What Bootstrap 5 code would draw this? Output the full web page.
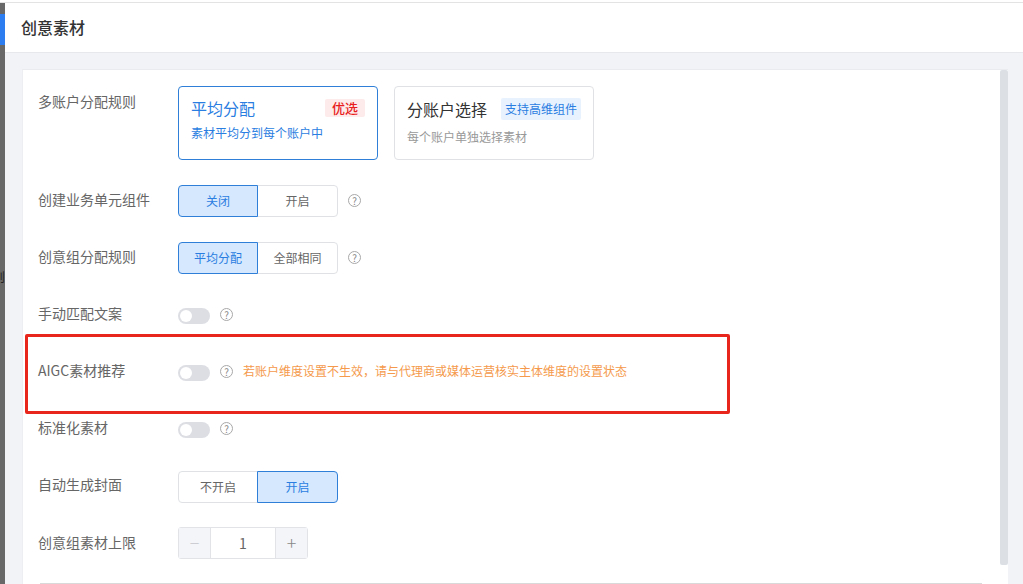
<!DOCTYPE html>
<html lang="zh-CN">
<head>
<meta charset="utf-8">
<title>创意素材</title>
<link href="https://cdn.jsdelivr.net/npm/bootstrap@5.3.0/dist/css/bootstrap.min.css" rel="stylesheet">
<style>
html,body{height:584px;overflow:hidden;}
body{font-family:"Noto Sans CJK SC","Liberation Sans",sans-serif;background:#fff;color:#666;font-size:14px;padding-top:2px;}
.topline{height:1px;background:#e3e3e3;}
.shell{height:581px;}
.strip{width:5px;background:#686868;overflow:hidden;flex:none;}
.strip-tab{height:31px;margin-top:11px;background:#2d7cf0;}
.strip-gap{height:224px;}
.strip-glyph{font-size:12px;line-height:16px;color:#222;margin-left:-7px;white-space:nowrap;}
.mainpane{background:#f1f3f7;min-width:0;}
.headbar{height:50px;flex:none;background:#fff;border-bottom:1px solid #e6e8eb;padding:0 0 2px 16px;font-size:16px;font-weight:500;color:#333;}
.sheet{flex:1 1 0;min-height:0;margin:16px 15px 0 17px;background:#fff;border-top:1px solid #e9ebee;border-left:1px solid #eceef1;position:relative;overflow:hidden;}
.sheet-body{padding:16px 0 0 15px;}
.scrolltrack{width:8px;}
.scrollthumb{height:495px;background:#dcdfe4;border-radius:2px;}
.frow{margin-bottom:25px;min-height:32px;}
.flabel{width:140px;flex:none;line-height:28px;padding-bottom:4px;font-size:14px;color:#666;}
.flabel.lowered{line-height:30px;padding-bottom:2px;}
.optcard{width:200px;height:74px;border:1px solid #dfe1e5;border-radius:4px;padding:9px 12px 0;background:#fff;}
.optcard.picked{border-color:#2f7fd8;}
.opt-title{font-size:16px;line-height:24px;color:#333;}
.picked .opt-title{color:#2a7de1;}
.opt-sub{font-size:12px;line-height:18px;color:#999;margin-top:4px;}
.picked .opt-sub{color:#2a7de1;}
.tag-red{font-size:13px;font-weight:500;line-height:18px;padding:0 7px;background:#fdeaea;color:#e81c1c;border-radius:2px;}
.tag-blue{font-size:12px;line-height:22px;padding:0 4px;background:#e8f2ff;color:#2a7de1;border-radius:2px;}
.second-opt{padding-top:10px;}
.second-opt .opt-sub{margin-top:7px;}
.segbtn.btn{width:80px;height:32px;padding:0 0 1px;font-size:12px;line-height:28px;color:#666;background:#fff;border:1px solid #dfe1e5;border-radius:4px;}
.segbtn.btn+.segbtn.btn{width:81px;}
.segbtn.on.btn{background:#d6e8fd;color:#2a7de1;border-color:#2f7fd8;z-index:1;}
.seg-lowered{margin-top:1px;margin-bottom:-1px;}
.qmark{width:13px;height:13px;border:1px solid #a8a8a8;border-radius:50%;font-size:10px;line-height:11px;text-align:center;color:#888;flex:none;margin-bottom:2px;}
.qmark.wide{margin-left:10px;}
.switcher{width:32px;height:16px;background:#dcdee4;border-radius:8px;position:relative;flex:none;margin-top:2px;}
.switcher::after{content:"";position:absolute;left:2px;top:2px;width:12px;height:12px;border-radius:50%;background:#fff;}
.hint{font-size:12px;color:#f59a4c;margin-left:10px;padding-bottom:2px;}
.stepper{height:32px;width:130px;border:1px solid #e1e3e7;border-radius:3px;}
.stepbtn{width:32px;background:#f4f5f8;font-size:18px;font-weight:300;line-height:28px;text-align:center;color:#888;flex:none;}
.stepbtn.off{color:#c4c6cb;border-right:1px solid #e1e3e7;}
.stepbtn.plus{border-left:1px solid #e1e3e7;}
.stepval{font-size:14px;line-height:30px;text-align:center;color:#666;}
.divide{height:1px;background:#d9d9d9;margin:24px 18px 0 2px;}
.redbox{position:absolute;left:2px;top:264px;width:705px;height:80px;border:3px solid #e8261c;border-radius:2px;}
</style>
</head>
<body>
<div class="topline"></div>
<div class="shell d-flex">
  <div class="strip">
    <div class="strip-tab"></div>
    <div class="strip-gap"></div>
    <div class="strip-glyph">则</div>
  </div>
  <div class="mainpane flex-grow-1 d-flex flex-column">
    <div class="headbar d-flex align-items-center">创意素材</div>
    <div class="sheet d-flex">
      <div class="sheet-body flex-grow-1">
        <div class="frow d-flex">
          <div class="flabel lowered">多账户分配规则</div>
          <div class="d-flex gap-3">
            <div class="optcard picked">
              <div class="d-flex justify-content-between align-items-center"><span class="opt-title">平均分配</span><span class="tag-red">优选</span></div>
              <div class="opt-sub">素材平均分到每个账户中</div>
            </div>
            <div class="optcard second-opt">
              <div class="d-flex justify-content-between align-items-center"><span class="opt-title">分账户选择</span><span class="tag-blue">支持高维组件</span></div>
              <div class="opt-sub">每个账户单独选择素材</div>
            </div>
          </div>
        </div>
        <div class="frow d-flex align-items-center">
          <div class="flabel">创建业务单元组件</div>
          <div class="btn-group"><button class="btn segbtn on">关闭</button><button class="btn segbtn">开启</button></div>
          <span class="qmark wide">?</span>
        </div>
        <div class="frow d-flex align-items-center">
          <div class="flabel">创意组分配规则</div>
          <div class="btn-group"><button class="btn segbtn on">平均分配</button><button class="btn segbtn">全部相同</button></div>
          <span class="qmark wide">?</span>
        </div>
        <div class="frow d-flex align-items-center">
          <div class="flabel">手动匹配文案</div>
          <span class="switcher"></span><span class="qmark wide">?</span>
        </div>
        <div class="frow d-flex align-items-center">
          <div class="flabel">AIGC素材推荐</div>
          <span class="switcher"></span><span class="qmark wide">?</span>
          <span class="hint">若账户维度设置不生效，请与代理商或媒体运营核实主体维度的设置状态</span>
        </div>
        <div class="frow d-flex align-items-center">
          <div class="flabel">标准化素材</div>
          <span class="switcher"></span><span class="qmark wide">?</span>
        </div>
        <div class="frow d-flex align-items-center">
          <div class="flabel">自动生成封面</div>
          <div class="btn-group seg-lowered"><button class="btn segbtn">不开启</button><button class="btn segbtn on">开启</button></div>
        </div>
        <div class="frow d-flex align-items-center mb-0">
          <div class="flabel lowered">创意组素材上限</div>
          <div class="stepper d-flex">
            <span class="stepbtn off">−</span>
            <span class="stepval flex-grow-1">1</span>
            <span class="stepbtn plus">+</span>
          </div>
        </div>
        <div class="divide"></div>
      </div>
      <div class="scrolltrack"><div class="scrollthumb"></div></div>
      <div class="redbox"></div>
    </div>
  </div>
</div>
<script src="https://cdn.jsdelivr.net/npm/bootstrap@5.3.0/dist/js/bootstrap.bundle.min.js"></script>
</body>
</html>
